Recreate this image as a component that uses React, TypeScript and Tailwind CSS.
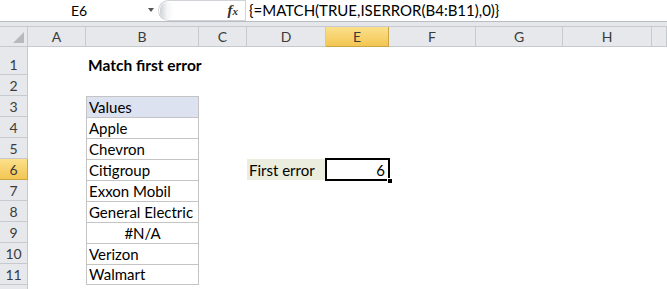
import React from "react";

const COLS = ["A", "B", "C", "D", "E", "F", "G", "H", "I"];
const VALUES = [
  "Apple",
  "Chevron",
  "Citigroup",
  "Exxon Mobil",
  "General Electric",
  "#N/A",
  "Verizon",
  "Walmart",
];

const hdr =
  "flex items-center justify-center border-r border-b border-[#c6c9ce] bg-[#e6e8ec] text-[14px] text-[#3b3b3b]";
const hdrActive =
  "flex items-center justify-center border-r border-b border-[#c9a546] bg-gradient-to-b from-[#fbe08a] to-[#f3c651] text-[14px] text-[#3b3b3b]";

function SheetCell({ row, col }: { row: number; col: string }) {
  // B1 title, spills into C1
  if (row === 1 && col === "B") {
    return (
      <div className="relative z-10 flex items-end whitespace-nowrap pb-[2px] pl-[2px] text-[15.5px] font-bold leading-none text-black">
        Match first error
      </div>
    );
  }
  // values table B3:B11
  if (col === "B" && row >= 3 && row <= 11) {
    const text = row === 3 ? "Values" : VALUES[row - 4];
    const centered = text === "#N/A";
    return (
      <div
        className={`flex items-end border-x border-t border-[#c4c4c4] pb-[2px] text-[15px] leading-none text-black ${
          row === 3 ? "bg-[#dce2f0]" : "bg-white"
        } ${row === 11 ? "border-b" : ""} ${centered ? "justify-center" : "pl-[2px]"}`}
      >
        {text}
      </div>
    );
  }
  if (row === 6 && col === "D") {
    return (
      <div className="flex items-end bg-[#ebedde] pb-[2px] pl-[2px] text-[15px] leading-none text-black">
        First error
      </div>
    );
  }
  if (row === 6 && col === "E") {
    return (
      <div className="relative flex items-end justify-end pb-[2px] pr-[4px] text-[15px] leading-none text-black">
        6
        <div className="absolute inset-[-1px] border-2 border-black" />
        <div className="absolute bottom-[-4px] right-[-4px] h-[6px] w-[6px] border border-white bg-black" />
      </div>
    );
  }
  return <div />;
}

export default function App() {
  const rows = Array.from({ length: 12 }, (_, i) => i + 1);

  return (
    <div className="h-[289px] w-[667px] overflow-hidden bg-white font-['Lato','Noto_Sans',sans-serif]">
      {/* Formula bar */}
      <div className="flex h-[22px] border-b border-[#b9bdc3] bg-white">
        <div className="relative flex w-[158px] items-center justify-center text-[14px] text-black">
          E6
          <span className="absolute right-[4px] top-[8px] h-0 w-0 border-x-[3px] border-t-[4px] border-x-transparent border-t-[#555]" />
        </div>
        <div className="flex w-[87px] items-center justify-between rounded-l-full border-y border-l border-[#d0d3d8] pr-[7px]">
          <span className="ml-[1px] h-[18px] w-[14px] rounded-full bg-gradient-to-r from-[#cfd2d6] via-[#f4f5f6] to-white" />
          <span className="font-['Liberation_Serif',serif] text-[15px] font-bold italic text-[#333]">
            f<span className="text-[11px]">x</span>
          </span>
        </div>
        <div className="flex flex-1 items-center border-l border-[#d0d3d8] pl-[3px] text-[15px] text-black">
          {"{=MATCH(TRUE,ISERROR(B4:B11),0)}"}
        </div>
      </div>
      <div className="h-[4px] bg-[#e4e6ea]" />

      {/* Sheet grid */}
      <div className="grid grid-cols-[28px_58px_113px_48px_79px_63px_87px_87px_89px_1fr] grid-rows-[20px_28px_repeat(11,21px)] border-t border-[#c6c9ce]">
        <div className="relative border-r border-b border-[#c6c9ce] bg-[#e6e8ec]">
          <span className="absolute bottom-[3px] right-[3px] h-0 w-0 border-b-[11px] border-l-[11px] border-b-[#b6b9be] border-l-transparent" />
        </div>
        {COLS.map((c) => (
          <div key={c} className={c === "E" ? hdrActive : hdr}>
            {c === "I" ? "" : c}
          </div>
        ))}
        {rows.map((r) => (
          <React.Fragment key={r}>
            <div className={`${r === 6 ? hdrActive : hdr} !items-end pb-[2px] leading-none`}>
              {r === 12 ? "" : r}
            </div>
            {COLS.map((c) => (
              <SheetCell key={c} row={r} col={c} />
            ))}
          </React.Fragment>
        ))}
      </div>
    </div>
  );
}
